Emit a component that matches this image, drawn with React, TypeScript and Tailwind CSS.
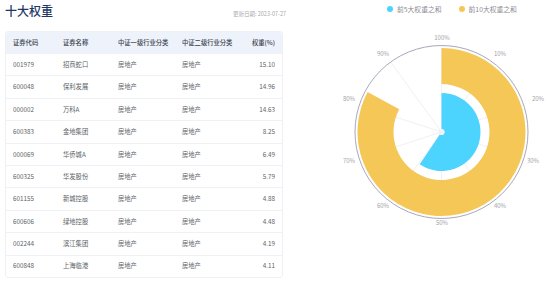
import React from 'react';

type Row = { code: string; name: string; l1: string; l2: string; weight: string };

const rows: Row[] = [
  { code: '001979', name: '招商蛇口', l1: '房地产', l2: '房地产', weight: '15.10' },
  { code: '600048', name: '保利发展', l1: '房地产', l2: '房地产', weight: '14.96' },
  { code: '000002', name: '万科A', l1: '房地产', l2: '房地产', weight: '14.63' },
  { code: '600383', name: '金地集团', l1: '房地产', l2: '房地产', weight: '8.25' },
  { code: '000069', name: '华侨城A', l1: '房地产', l2: '房地产', weight: '6.49' },
  { code: '600325', name: '华发股份', l1: '房地产', l2: '房地产', weight: '5.79' },
  { code: '601155', name: '新城控股', l1: '房地产', l2: '房地产', weight: '4.88' },
  { code: '600606', name: '绿地控股', l1: '房地产', l2: '房地产', weight: '4.48' },
  { code: '002244', name: '滨江集团', l1: '房地产', l2: '房地产', weight: '4.19' },
  { code: '600848', name: '上海临港', l1: '房地产', l2: '房地产', weight: '4.11' },
];

// 极坐标中心（页面坐标）
const CX = 441.5;
const CY = 132;

const pt = (r: number, deg: number) => {
  const a = (deg * Math.PI) / 180;
  return [CX + r * Math.sin(a), CY - r * Math.cos(a)];
};

const sector = (r0: number, r1: number, pct: number) => {
  const end = (pct / 100) * 360;
  const large = end > 180 ? 1 : 0;
  const [ox0, oy0] = pt(r1, 0);
  const [ox1, oy1] = pt(r1, end);
  const [ix1, iy1] = pt(r0, end);
  const [ix0, iy0] = pt(r0, 0);
  return `M${ox0} ${oy0} A${r1} ${r1} 0 ${large} 1 ${ox1} ${oy1} L${ix1} ${iy1} A${r0} ${r0} 0 ${large} 0 ${ix0} ${iy0} Z`;
};

const labels: { t: string; x: number; y: number }[] = [
  { t: '100%', x: 442, y: 38 },
  { t: '10%', x: 500, y: 54 },
  { t: '20%', x: 538, y: 99 },
  { t: '30%', x: 533, y: 161 },
  { t: '40%', x: 500, y: 206 },
  { t: '50%', x: 442, y: 223 },
  { t: '60%', x: 383, y: 206 },
  { t: '70%', x: 349, y: 161 },
  { t: '80%', x: 349, y: 99 },
  { t: '90%', x: 383, y: 54 },
];

const top5 = rows.slice(0, 5).reduce((s, r) => s + parseFloat(r.weight), 0);
const top10 = rows.reduce((s, r) => s + parseFloat(r.weight), 0);

const PolarChart = () => (
  <svg width="262" height="264" viewBox="288 20 262 264">
    {Array.from({ length: 10 }).map((_, i) => {
      const [x, y] = pt(86, i * 36);
      return <line key={i} x1={CX} y1={CY} x2={x} y2={y} stroke="#ececef" strokeWidth="0.8" />;
    })}
    <circle cx={CX} cy={CY} r="86.5" fill="none" stroke="#9e9db3" strokeWidth="0.9" />
    <path d={sector(48, 84, top10)} fill="#f4c756" />
    <path d={sector(3, 39, top5)} fill="#4cd3fe" />
    <circle cx={CX} cy={CY} r="3" fill="#f1f1f3" />
    {labels.map((l) => (
      <text key={l.t} x={l.x} y={l.y} fontSize="6" fill="#a3a3a8" textAnchor="middle" dominantBaseline="middle">
        {l.t}
      </text>
    ))}
  </svg>
);

const cols = 'grid grid-cols-[50px_55px_64px_1fr_36px] px-[7px] items-center whitespace-nowrap';

const App = () => {
  return (
    <div
      className="w-[550px] h-[284px] bg-white flex overflow-hidden"
      style={{ fontFamily: '"Noto Sans CJK SC", "Noto Sans", sans-serif' }}
    >
      <div className="w-[288px] pl-[5px] pr-[5px] flex flex-col">
        <div className="h-[31px] flex justify-between">
          <h1 className="text-[12px] leading-[14px] mt-[4px] text-[#1f3765] font-medium">十大权重</h1>
          <span className="text-[5.5px] leading-[8px] mt-[10px] -mr-[3px] text-[#a8a8ad]">更新日期: 2023-07-27</span>
        </div>
        <div className="rounded-[3px] border border-[#eef0f4] overflow-hidden text-[6.3px]">
          <div className={`${cols} h-[21px] bg-[#edf2fb] text-[#3a3f4b] font-medium`}>
            <span>证券代码</span>
            <span>证券名称</span>
            <span>中证一级行业分类</span>
            <span>中证二级行业分类</span>
            <span className="text-right">权重(%)</span>
          </div>
          {rows.map((r) => (
            <div key={r.code} className={`${cols} h-[22.4px] border-t border-[#f0f1f5] text-[#5c5f66]`}>
              <span>{r.code}</span>
              <span>{r.name}</span>
              <span>{r.l1}</span>
              <span>{r.l2}</span>
              <span className="text-right">{r.weight}</span>
            </div>
          ))}
        </div>
      </div>
      <div className="flex-1 flex flex-col">
        <div className="h-[20px] flex items-start pt-[5px] pl-[99px] gap-[17px] text-[6.8px] leading-[8px] text-[#8c8c94]">
          <div className="flex items-center gap-[4px]">
            <span className="w-[6px] h-[6px] rounded-full bg-[#4cd3fe]" />
            <span>前5大权重之和</span>
          </div>
          <div className="flex items-center gap-[4px]">
            <span className="w-[6px] h-[6px] rounded-full bg-[#f4c756]" />
            <span>前10大权重之和</span>
          </div>
        </div>
        <PolarChart />
      </div>
    </div>
  );
};

export default App;
